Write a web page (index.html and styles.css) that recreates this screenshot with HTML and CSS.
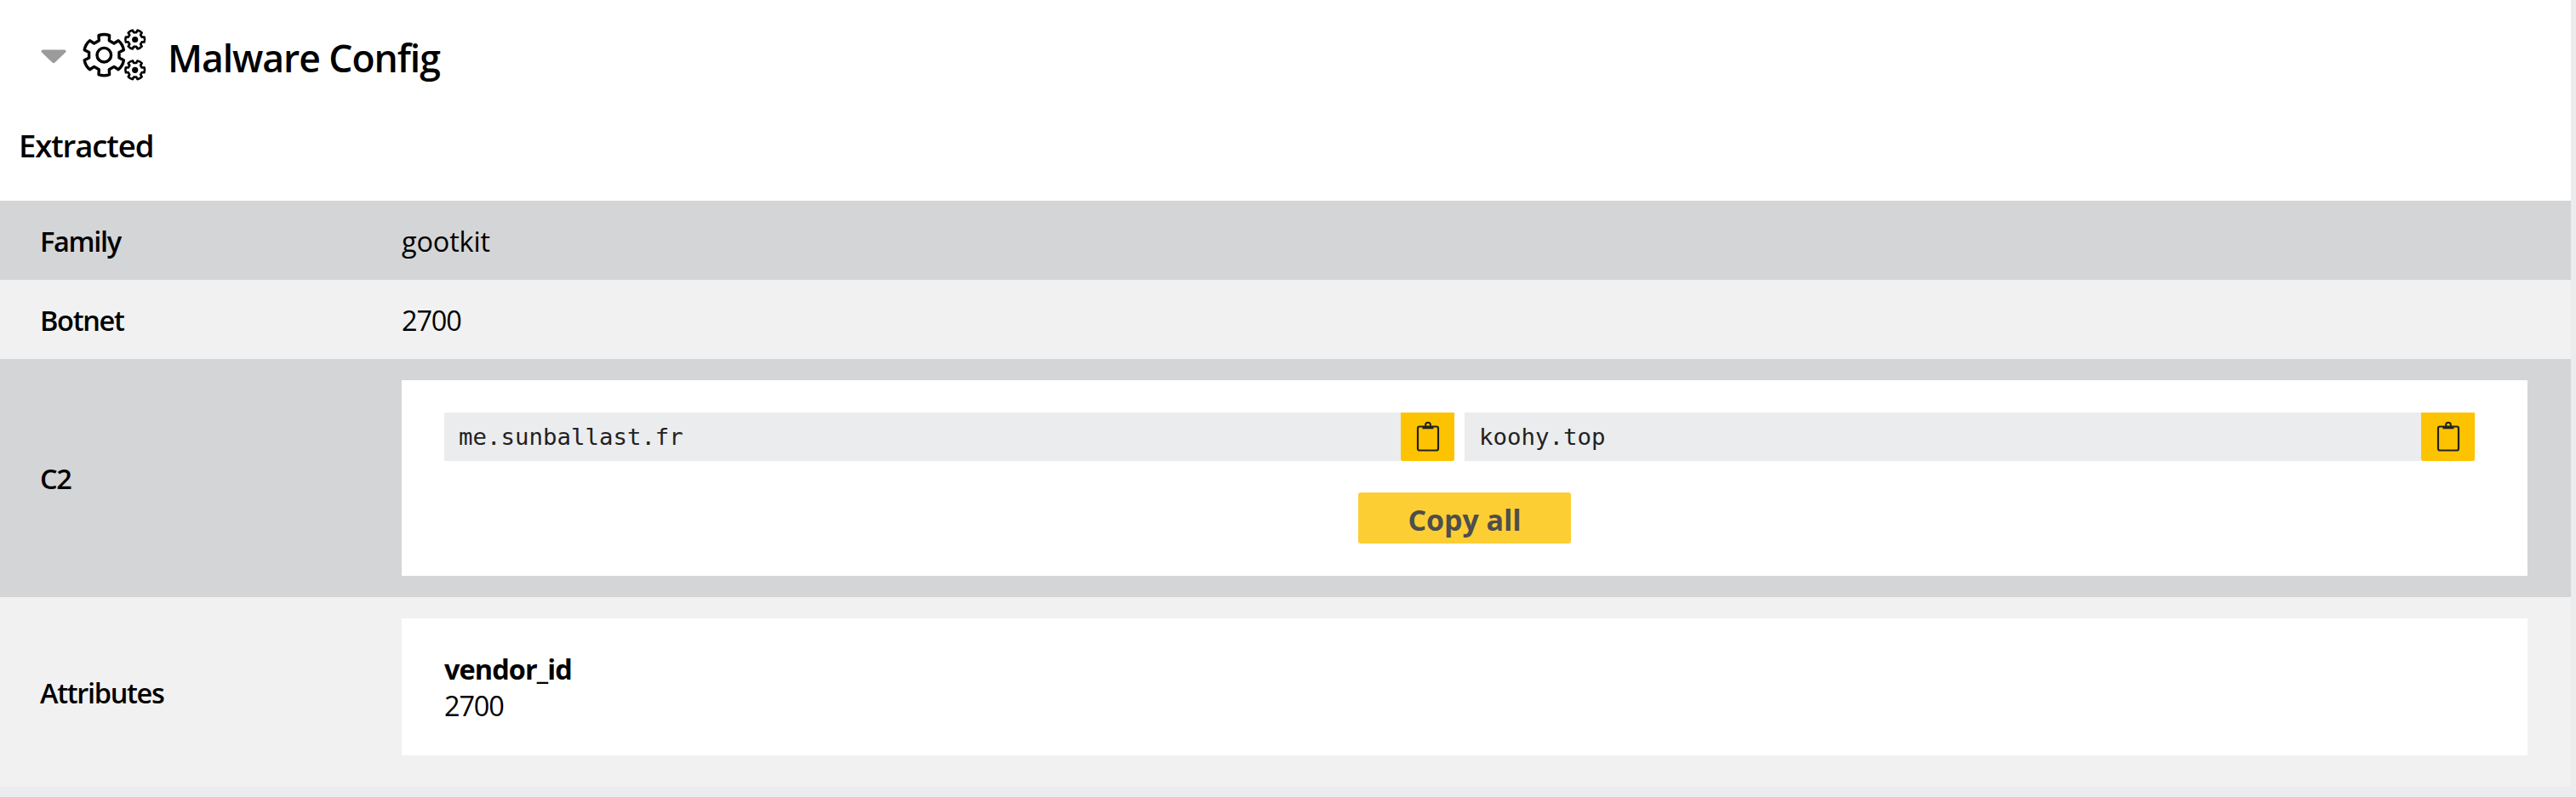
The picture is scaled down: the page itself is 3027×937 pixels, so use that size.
FILE: index.html
```html
<!DOCTYPE html>
<html lang="en">
<head>
<meta charset="utf-8">
<title>Malware Config</title>
<link rel="stylesheet" href="styles.css">
</head>
<body>
<main class="card">
  <header class="head">
    <svg class="caret" width="30" height="17" viewBox="0 0 30 17"><path d="M2 .5h26q2.500 1 1 3L16.500 15.500q-1.500 1.500-3 0L1 3.500q-1.500-2 1-3z" fill="#9b9b9b"/></svg>
    <svg class="gears" width="80" height="66" viewBox="95 32 80 66" fill="none" stroke="#000" stroke-linejoin="round">
      <defs>
        <path id="gear" d="M-6-17L-6.300-23Q0-25.400 6.300-23L6-17 11.700-13.700 16.800-17Q22-12.700 23.100-6L17.700-3.300V3.300L23.100 6Q22 12.700 16.800 17L11.700 13.700 6 17 6.300 23Q0 25.400-6.300 23L-6 17-11.700 13.700-16.800 17Q-22 12.700-23.100 6L-17.700 3.300V-3.300L-23.100-6Q-22-12.700-16.800-17L-11.700-13.700Z"/>
      </defs>
      <use href="#gear" transform="translate(122.300 64.700)" stroke-width="3.400"/>
      <circle cx="122.300" cy="64.700" r="8.300" stroke-width="3.400"/>
      <use href="#gear" transform="translate(158.700 46.500) rotate(30) scale(.47)" stroke-width="5.600"/>
      <circle cx="158.700" cy="46.500" r="3.600" fill="#000" stroke="none"/>
      <use href="#gear" transform="translate(158.700 82.300) rotate(30) scale(.47)" stroke-width="5.600"/>
      <circle cx="158.700" cy="82.300" r="3.600" fill="#000" stroke="none"/>
    </svg>
    <h1 class="title">Malware Config</h1>
  </header>
  <h2 class="subtitle">Extracted</h2>
  <section class="row dark short">
    <div class="label">Family</div>
    <div class="value">gootkit</div>
  </section>
  <section class="row short">
    <div class="label">Botnet</div>
    <div class="number">2700</div>
  </section>
  <section class="row dark hosts">
    <div class="label">C2</div>
    <div class="panel list">
      <div class="fields">
        <div class="field"><span class="host">me.sunballast.fr</span><button class="copy" aria-label="Copy"><svg width="28" height="37" viewBox="0 0 28 37" fill="none" stroke="#222"><rect x="2" y="6.500" width="24" height="28" rx="2" stroke-width="2.200"/><path d="M7.500 6h13v3.300h-13z" fill="#222" stroke="none"/><circle cx="14" cy="4.700" r="2.900" stroke-width="2"/></svg></button></div>
        <div class="field"><span class="host">koohy.top</span><button class="copy" aria-label="Copy"><svg width="28" height="37" viewBox="0 0 28 37" fill="none" stroke="#222"><rect x="2" y="6.500" width="24" height="28" rx="2" stroke-width="2.200"/><path d="M7.500 6h13v3.300h-13z" fill="#222" stroke="none"/><circle cx="14" cy="4.700" r="2.900" stroke-width="2"/></svg></button></div>
      </div>
      <button class="copy-all">Copy all</button>
    </div>
  </section>
  <section class="row attrs">
    <div class="label">Attributes</div>
    <div class="panel attr">
      <div class="key">vendor_id</div>
      <div class="number">2700</div>
    </div>
  </section>
</main>
</body>
</html>
```

FILE: styles.css
```css
* { box-sizing: border-box; }
body {
  margin: 0;
  background: #ebecee;
  color: #000;
  font: 400 32.5px/43px "Open Sans", "Noto Sans", sans-serif;
}
.card { width: 3021px; height: 925px; background: #fff; }
.head { display: flex; align-items: center; height: 133px; padding-left: 48px; }
.caret { margin-right: 17px; }
.gears { margin-top: -3px; }
.title { margin: 1px 0 0 22px; font-size: 44.5px; font-weight: 600; letter-spacing: -1.05px; }
.subtitle { margin: 0; height: 103px; padding: 17px 0 0 22px; font-size: 36.5px; font-weight: 600; letter-spacing: -1.1px; }
.row { display: flex; align-items: center; background: #f1f1f1; padding-left: 47px; }
.dark { background: #d4d5d7; }
.short { height: 93px; padding-top: 2px; }
.label { width: 425px; font-weight: 600; letter-spacing: -1.3px; }
.value { letter-spacing: -.2px; }
.number { letter-spacing: -1.2px; }
.hosts { height: 280px; }
.attrs { height: 223px; }
.attrs .label { padding-top: 2px; }
.panel { width: 2498px; background: #fff; }
.list { height: 230px; padding: 38px 62px 0 50px; display: flex; flex-direction: column; align-items: center; gap: 37px; }
.fields { display: flex; gap: 12px; }
.field { display: flex; width: 1187px; height: 57px; background: #ebecee; color: #222; justify-content: space-between; }
.host { padding-left: 17px; font: 27.4px/57px "DejaVu Sans Mono", monospace; }
.copy { width: 63px; height: 57px; border: 0; padding: 0; border-radius: 0 0 3px 3px; background: #fdc300; display: flex; align-items: center; justify-content: center; }
.copy-all { width: 250px; height: 60px; margin-left: 12px; padding: 5px 0 0; border: 0; border-radius: 3px; background: #fdce33; color: #4e4e4e; font: 700 34px/43px "Open Sans", sans-serif; letter-spacing: -.1px; }
.attr { height: 161px; padding: 38px 50px 0; margin-bottom: 12px; }
.key { font-weight: 700; letter-spacing: -.95px; }
```
